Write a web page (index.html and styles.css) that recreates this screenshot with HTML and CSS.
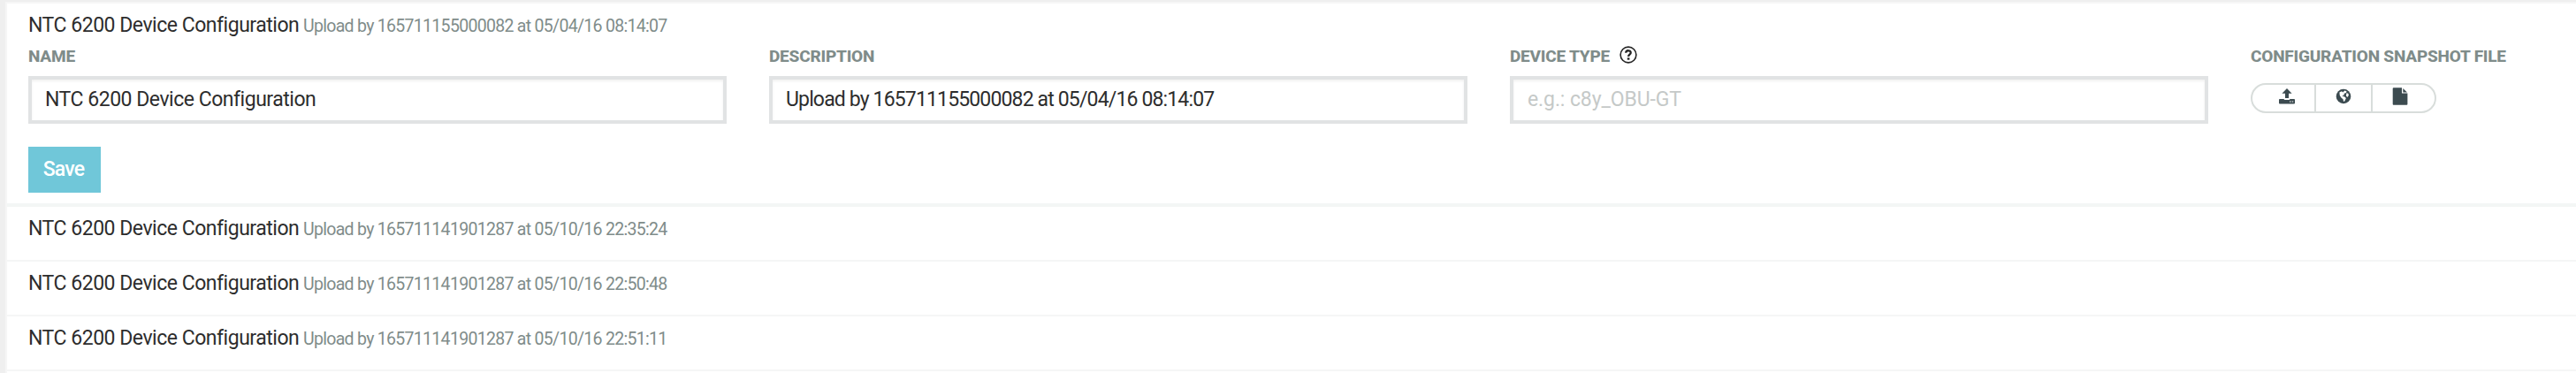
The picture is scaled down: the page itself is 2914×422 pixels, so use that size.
FILE: index.html
```html
<!DOCTYPE html>
<html lang="en">
<head>
<meta charset="utf-8">
<title>Configuration snapshots</title>
<link rel="stylesheet" href="styles.css">
</head>
<body>
<main class="panel">
  <section class="item item-open">
    <header class="heading"><span class="name">NTC 6200 Device Configuration</span><small class="note">Upload by 165711155000082 at 05/04/16 08:14:07</small></header>
    <form class="form">
      <div class="fields">
        <div class="field">
          <label class="label" for="name">NAME</label>
          <input class="input input-name" id="name" type="text" value="NTC 6200 Device Configuration">
        </div>
        <div class="field">
          <label class="label" for="description">DESCRIPTION</label>
          <input class="input input-description" id="description" type="text" value="Upload by 165711155000082 at 05/04/16 08:14:07">
        </div>
        <div class="field">
          <label class="label" for="type">DEVICE TYPE
            <svg class="help" viewBox="0 0 20 20"><circle cx="10" cy="10" r="8.9" fill="none" stroke="currentColor" stroke-width="1.6"/><path d="M7.2 7.7C7.400 4.300 13 4.600 12.700 7.800C12.500 9.700 10.100 9.700 10.100 12" fill="none" stroke="currentColor" stroke-width="2.300"/><path d="M8.800 13.300h2.600v2.400H8.800z" fill="currentColor"/></svg>
          </label>
          <input class="input input-type" id="type" type="text" placeholder="e.g.: c8y_OBU-GT">
        </div>
        <div class="field">
          <span class="label">CONFIGURATION SNAPSHOT FILE</span>
          <div class="pill">
            <button class="pill-btn" type="button" aria-label="Upload"><svg class="icon" viewBox="0 0 20 20"><path d="M10 1l5.600 5.800H12V12H8V6.800H4.400z"/><path fill-rule="evenodd" d="M1.900 13h4.500l1 1h5.200l1-1h4.500q.9 0 .9.900v3.700q0 .9-.9.900H1.900q-.9 0-.9-.9v-3.700q0-.9.900-.900zM13 15.400v1.200h1.500v-1.200zM15.700 15.400v1.200h1.500v-1.200z"/></svg></button>
            <button class="pill-btn" type="button" aria-label="From URL"><svg class="icon" viewBox="0 0 20 20"><circle cx="10" cy="10" r="8.300"/><path fill="#fff" d="M5.400 5.400L8 4.200l1.400 1.200 1.800-1.900 2.300.7-.5 1.700-2.200.8-.3 1.900-2.200 1.500 2.600.1 2 1.900-1.500 3.200-1.300.7-.6-2.700-2.100-1.700L5.800 9z"/><path fill="#fff" d="M13.400 6.200l1.900.5.6 2-1.500 2.200-1.500-1.400z"/></svg></button>
            <button class="pill-btn" type="button" aria-label="From file"><svg class="icon" viewBox="0 0 20 20"><path d="M2.600.300H12v6.200h6.400v12.300q0 .9-.9.900H2.600q-.9 0-.9-.9V1.200q0-.9.9-.900z"/><path d="M13.300.900l4.700 4.500h-4.700z"/></svg></button>
          </div>
        </div>
      </div>
      <button class="save" type="button">Save</button>
    </form>
  </section>
  <section class="item"><header class="heading"><span class="name">NTC 6200 Device Configuration</span><small class="note">Upload by 165711141901287 at 05/10/16 22:35:24</small></header></section>
  <section class="item"><header class="heading"><span class="name">NTC 6200 Device Configuration</span><small class="note">Upload by 165711141901287 at 05/10/16 22:50:48</small></header></section>
  <section class="item"><header class="heading"><span class="name">NTC 6200 Device Configuration</span><small class="note">Upload by 165711141901287 at 05/10/16 22:51:11</small></header></section>
</main>
</body>
</html>
```
FILE: styles.css
```css
* { box-sizing: border-box; }
body {
  margin: 0;
  padding: 2px 0 0 6px;
  height: 422px;
  overflow: hidden;
  background: #efefef;
  color: #2d2d2d;
  font: 23px Roboto, sans-serif;
}
.panel {
  height: 420px;
  border: solid #f6f6f6;
  border-width: 2px 0 0 2px;
  background: #fff;
}
.item {
  height: 62px;
  padding: 11px 24px 0;
  border-bottom: 2px solid #f5f6f6;
}
.item-open {
  height: 230px;
  border-bottom: 4px solid #f3f6f5;
}
.heading {
  display: flex;
  align-items: baseline;
  height: 27px;
  line-height: 28px;
  white-space: nowrap;
}
.name { width: 311px; letter-spacing: -.48px; }
.note {
  font-size: 19.5px;
  letter-spacing: -.7px;
  color: #7f8c8a;
}
.fields {
  display: grid;
  grid-template-columns: repeat(3, 790px) 340px;
  column-gap: 48px;
}
.field { padding-top: 8px; }
.label {
  display: flex;
  align-items: center;
  gap: 11px;
  height: 27px;
  margin-bottom: 9px;
  font-size: 19px;
  font-weight: 800;
  letter-spacing: -.21px;
  white-space: nowrap;
  color: #7f8c8a;
}
.help {
  width: 20px;
  height: 20px;
  margin-top: -3px;
  color: #252525;
}
.input {
  display: block;
  width: 790px;
  height: 54px;
  padding: 0 16px 1px;
  border: 4px solid #e1e3e4;
  border-radius: 0;
  outline: 0;
  background: #fff;
  box-shadow: inset 0 2px 3px rgba(0, 0, 0, .06);
  color: #2d2d2d;
  font: inherit;
}
.input-name { padding-left: 15px; letter-spacing: -.48px; }
.input-description { padding-left: 15px; letter-spacing: -.85px; }
.input-type { letter-spacing: -.1px; }
.input::placeholder { color: #c5c9c8; opacity: 1; }
.pill {
  display: flex;
  width: 210px;
  height: 34px;
  margin-top: 17px;
  border: 2px solid #d8dddb;
  border-radius: 17px;
  overflow: hidden;
}
.pill-btn {
  flex: 0 0 64px;
  padding: 0;
  border: 0;
  border-right: 2px solid #d8dddb;
  background: none;
  color: #3c4b50;
  line-height: 0;
}
.pill-btn:first-child { flex-basis: 72px; padding-left: 8px; }
.pill-btn:last-child { flex-basis: 70px; padding-right: 8px; border-right: 0; }
.icon {
  display: block;
  width: 20px;
  height: 20px;
  margin: 0 auto 4px;
  fill: currentColor;
}
.save {
  display: block;
  width: 82px;
  height: 52px;
  margin-top: 26px;
  padding: 0 2px 2px 0;
  border: 0;
  background: #70c7d9;
  color: #fff;
  font: 500 23px Roboto, sans-serif;
  letter-spacing: -.8px;
}
```
